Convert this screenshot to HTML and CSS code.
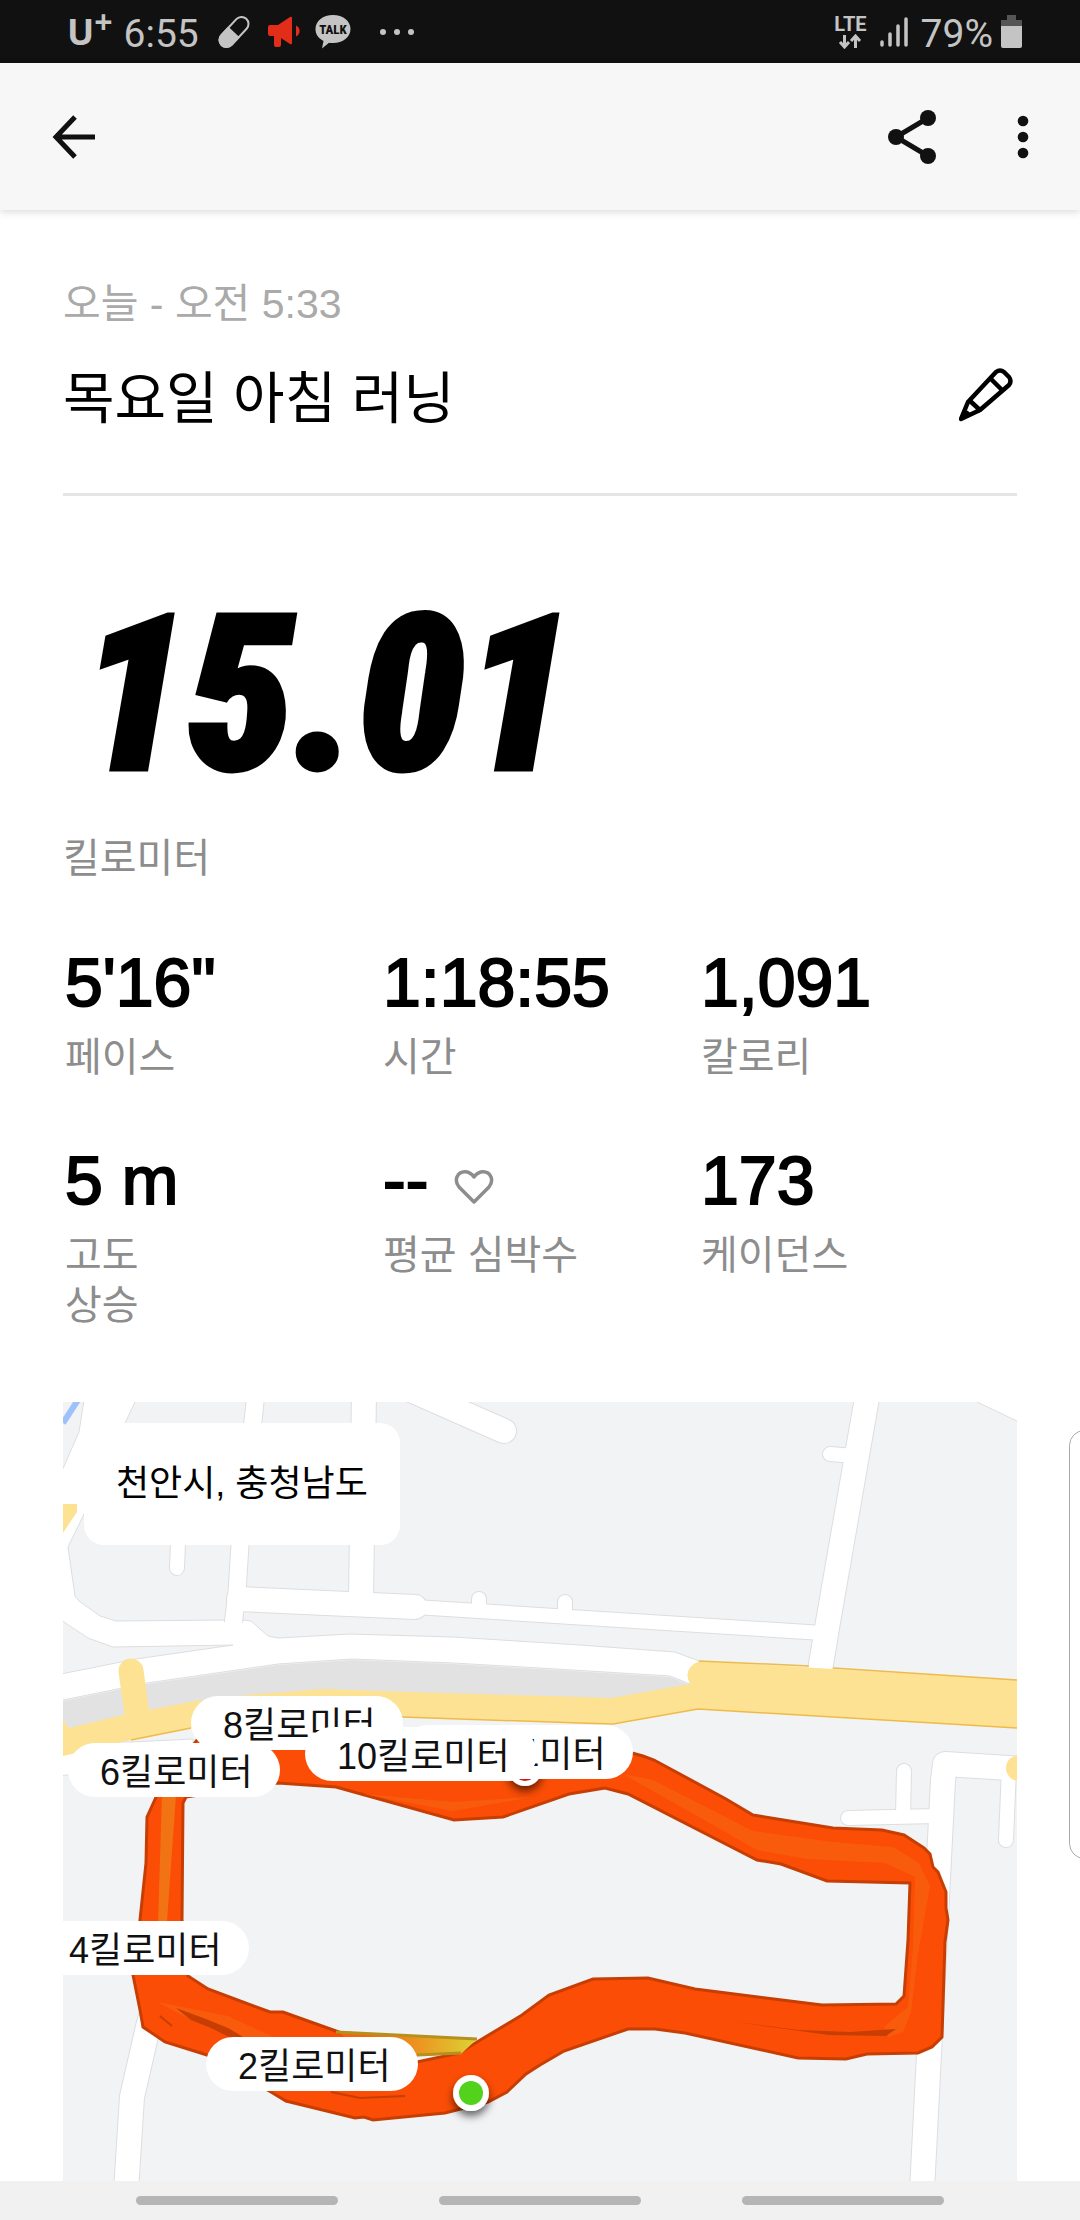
FILE: index.html
```html
<!DOCTYPE html>
<html lang="ko">
<head>
<meta charset="utf-8">
<meta name="viewport" content="width=device-width, initial-scale=1">
<title>목요일 아침 러닝</title>
<link rel="stylesheet" href="styles.css">
</head>
<body>
<div class="screen">
  <div class="status-bar">
    <div class="status-group">
      <span class="carrier">U<span class="carrier-plus">+</span></span>
      <span class="status-text">6:55</span>
      <svg class="ico-pill" width="32" height="34" viewBox="0 0 32 34" aria-hidden="true">
        <g transform="rotate(43 16 17)"><rect x="9" y="-1" width="14" height="36" rx="7" fill="none" stroke="#c4c4c4" stroke-width="2"/><path d="M8 17h16v11a8 8 0 0 1-16 0z" fill="#c4c4c4"/></g>
      </svg>
      <svg class="ico-horn" width="32" height="32" viewBox="0 0 32 32" aria-hidden="true">
        <path d="M2 9h8L22 1q2-1 2 1v25q0 2-2 1l-9-6v7q0 2-2 2H8q-2 0-2-2V20H2q-2 0-2-2v-7q0-2 2-2z" fill="#e22d18"/><path d="M28 9.500a6 6 0 0 1 0 11z" fill="#e22d18"/>
      </svg>
      <svg class="ico-talk" width="36" height="36" viewBox="0 0 36 36" aria-hidden="true">
        <path d="M18 1c10 0 17.500 6 17.500 14S28 29 18 29c-1 0-3 0-4-.3L7 34.500l1.500-7.500C3 24 .5 20 .5 15 .5 7 8 1 18 1z" fill="#c4c4c4"/>
        <text x="18" y="20" text-anchor="middle" font-family="Roboto Condensed, Roboto, sans-serif" font-size="13" font-weight="800" fill="#111">TALK</text>
      </svg>
      <svg class="ico-more" width="36" height="8" viewBox="0 0 36 8" aria-hidden="true" fill="#c4c4c4"><circle cx="4" cy="4" r="3"/><circle cx="18" cy="4" r="3"/><circle cx="32" cy="4" r="3"/></svg>
    </div>
    <div class="status-group status-right">
      <div class="lte">
        <span>LTE</span>
        <svg width="24" height="15" viewBox="0 0 24 15" aria-hidden="true" fill="none" stroke="#c4c4c4" stroke-width="3"><path d="M6.500 1v11M2 8l4.500 5L11 8M17.500 14V3M13 7l4.500-5L22 7"/></svg>
      </div>
      <svg width="28" height="32" viewBox="0 0 28 32" aria-hidden="true" stroke="#c4c4c4" stroke-width="3.500" stroke-linecap="round"><path d="M2 26v3M10 18v11M18 10v19M26 3v26"/></svg>
      <span class="status-text percent">79%</span>
      <svg width="21" height="34" viewBox="0 0 21 34" aria-hidden="true"><path d="M6 0h9v5h6v7H0V5h6z" fill="#555"/><path d="M0 11h21v20q0 2-2 2H2q-2 0-2-2z" fill="#c4c4c4"/></svg>
    </div>
  </div>

  <header class="app-bar">
    <button class="icon-button" type="button" aria-label="뒤로">
      <svg width="44" height="44" viewBox="0 0 44 44" fill="none" stroke="#111" stroke-width="5"><path d="M43 22H5M23 2L4 22l19 20"/></svg>
    </button>
    <div class="app-actions">
      <button class="icon-button" type="button" aria-label="공유">
        <svg width="48" height="54" viewBox="0 0 48 54" fill="#111"><path d="M40 8L8 27l32 19" fill="none" stroke="#111" stroke-width="5"/><circle cx="40" cy="8" r="8"/><circle cx="8" cy="27" r="8"/><circle cx="40" cy="46" r="8"/></svg>
      </button>
      <button class="icon-button" type="button" aria-label="더보기">
        <svg width="12" height="44" viewBox="0 0 12 44" fill="#111"><circle cx="6" cy="6" r="5.300"/><circle cx="6" cy="22" r="5.300"/><circle cx="6" cy="38" r="5.300"/></svg>
      </button>
    </div>
  </header>

  <main class="content">
    <section class="run-head">
      <p class="run-date">오늘 - 오전 5:33</p>
      <div class="run-title-row">
        <h1 class="run-title">목요일 아침 러닝</h1>
        <button class="icon-button" type="button" aria-label="이름 편집">
          <svg width="58" height="62" viewBox="0 0 58 62" fill="none" stroke="#000" stroke-width="4.500" stroke-linejoin="round"><path d="M2 51l7-17L37 4q4-3 8 0l5 5q3 4 0 8L21 42z"/><path d="M32 11l11 11M10 32l12 11M7 44l4 4M3 50l5-7"/></svg>
        </button>
      </div>
    </section>

    <section class="distance">
      <p class="distance-value">15.01</p>
      <p class="label">킬로미터</p>
    </section>

    <dl class="stats">
      <div class="stat"><dd class="stat-value">5'16"</dd><dt class="label">페이스</dt></div>
      <div class="stat"><dd class="stat-value">1:18:55</dd><dt class="label">시간</dt></div>
      <div class="stat"><dd class="stat-value">1,091</dd><dt class="label">칼로리</dt></div>
      <div class="stat"><dd class="stat-value">5 m</dd><dt class="label">고도<br>상승</dt></div>
      <div class="stat"><dd class="stat-value">--<svg class="heart" width="40" height="36" viewBox="0 0 40 36" aria-hidden="true"><path d="M20 33L5 18Q1 13 3 8c3-7 12-7 17 0 5-7 14-7 17 0q2 5-2 10z" fill="none" stroke="#8d8d8d" stroke-width="3.500" stroke-linejoin="round"/></svg></dd><dt class="label">평균 심박수</dt></div>
      <div class="stat"><dd class="stat-value">173</dd><dt class="label">케이던스</dt></div>
    </dl>

    <section class="map" aria-label="러닝 경로">
      <svg class="map-canvas" viewBox="0 0 954 779" preserveAspectRatio="xMinYMin slice" aria-hidden="true">
        <defs>
          <linearGradient id="pace" x1="300" y1="0" x2="410" y2="0" gradientUnits="userSpaceOnUse"><stop offset="0" stop-color="#f5640f"/><stop offset=".5" stop-color="#ec9420"/><stop offset="1" stop-color="#dcd034"/></linearGradient>
          <filter id="drop" x="-50%" y="-50%" width="200%" height="200%"><feDropShadow dx="0" dy="5" stdDeviation="4" flood-opacity=".6"/></filter>
          <g id="roads">
            <path class="w18" d="M192-10V0L177 143l-3 47-4 34"/>
            <path class="w25" d="M301-10L298 196"/>
            <path class="w25" d="M176 197L352 205"/>
            <path class="w15" d="M352 205L760 231M416 197v12M502 200v13M115 140l-1 26M767 52l24 2"/>
            <path class="w25" d="M341-15l100 44M805-10L765 220l-9 54"/>
            <path class="w25" d="M104 390v170L85 625 69 695l-6 94"/>
            <path class="w25" d="M859 789L880 378l2-16 80 5"/>
            <path class="w15" d="M841 369l-1 45M785 416l88-2M946 366l-3 72"/>
          </g>
        </defs>
        <rect width="954" height="779" fill="#f1f3f5"/>
        <path d="M0 21L15-2" stroke="#9ec1fa" stroke-width="6"/>
        <g fill="#fff" stroke="#dcdee1" stroke-width="1">
          <path d="M21-2H73L62 21 21 112 5 145l7 49 4 5 21 15 16 5 112-1 15 0 8 1 17 15 10 2 72-4 103 3 127 8 95 7 24 9-9 23-20-8-130-8-87-5-101-4-74 5-131 19-84 17H-2V272l75-15 97-14-120 2-25-9-27-18V71L16 30z"/>
          <path d="M910-2L956 20V-2z"/>
          <path d="M-2 340H68L130 337v12L-2 374z"/>
        </g>
        <use href="#roads" class="casing"/>
        <use href="#roads" class="paved"/>
        <path d="M54 220h110l24 1 17 15-30 6-125 2z" fill="#fff"/>
        <path d="M0 299l84-17 131-19 74-5 101 4 87 5 130 8 20 8-79 14-31 2-168-6-90 2L6 326 0 318z" fill="#e2e2e2"/>
        <path d="M0 102h14v8L0 131z" fill="#fde293"/>
        <path d="M0 318l6 8 54-13 72-14 53-6 74-6 90 3 168 5 31 1 79-14q-8-15 9-23l318 19v48l-319-19-85 15-33-1-178-6-211 11-60 12-68 16z" fill="#fde293"/>
        <path d="M68 338l60-12M339 315l178 6 33 1 85-15 319 19M636 259l110 5M770 266l184 12" fill="none" stroke="#eebb49" stroke-width="1.500"/>
        <path d="M68 269l7 50" stroke="#fde293" stroke-width="25" stroke-linecap="round"/>
        <circle cx="956" cy="366" r="13" fill="#fde293"/>

        <path d="M134 338l70-2 160-8 120 6 85 17 11 3 11 4 72 39 27 16 80 13 49 2 22 5 20 13 6 6 3 13 5 5 8 20v16l2 12-3 22-3 95-10 10-14 6-51 1-21 5-48-1-113-25-30-4h-27l-64 22-24 14-14 9-19 18-19 10-43 11-72 7-9-3-9 1-69-17-15-9-64-37-42-13-22-15-3-17-7-35 7-55 6-57 1-46 10-22z
          M215 381l58 4 118 33 49-3 66-23 36-6 23 6 129 66 24 4 46 17 83 2-2 57-4 56-8 8-74 1-127-16-47-11-55 1-44 16-27 20-45 27-18 11-42 9-24-10-57-21-53-19h-13l-62-23-20-13-6-56 1-117 3-6z" fill="#fb4d05" fill-rule="evenodd" stroke="#c63e04" stroke-width="3"/>
        <g fill="#f95b0c">
          <path d="M560 372l30 6 100 51 80 11 60 5 25 15 12 24-12 68-7 58-8 20-15 5-4-10 24-20 5-60 2-70-30-14-78-4-50-9z"/>
          <path d="M95 600l70 14 60 28-45-4-60-24zM300 392l90 8 80-5-80 14z"/>
        </g>
        <path d="M99 393h14l-9 127h-9z" fill="#f17314"/>
        <path d="M113 606l30 11 22 9 17 10-14 0-20-10-20-8zM673 620l62 8 52 2 46-3-10 7-57-1z" fill="#c63e04"/>
        <path d="M97 614l12 10M268 690l29 6 45-2" fill="none" stroke="#c63e04" stroke-width="2"/>
        <path d="M273 629l141 8-16 15-44 2-54-6z" fill="url(#pace)"/>
        <path d="M273 630l141 7M354 653l44-2" fill="none" stroke="#b5901c" stroke-width="3"/>
        <g filter="url(#drop)"><circle cx="462" cy="367" r="17" fill="#fff"/><circle cx="408" cy="691" r="18" fill="#fff"/></g>
        <circle cx="462" cy="367" r="12" fill="#d8141c"/><circle cx="408" cy="691" r="12" fill="#52d21a"/>
      </svg>
      <p class="place">천안시, 충청남도</p>
      <span class="pin pin-2">2킬로미터</span>
      <span class="pin pin-4">4킬로미터</span>
      <span class="pin pin-8">8킬로미터</span>
      <span class="pin pin-6">6킬로미터</span>
      <span class="pin pin-12">12킬로미터</span>
      <span class="pin pin-10">10킬로미터</span>
    </section>
  </main>

  <div class="edge-handle"></div>
  <nav class="nav-bar" aria-label="시스템 탐색">
    <button class="nav-key" type="button" aria-label="최근 앱"></button>
    <button class="nav-key" type="button" aria-label="홈"></button>
    <button class="nav-key" type="button" aria-label="이전"></button>
  </nav>
</div>
</body>
</html>
```
FILE: styles.css
```css
* { box-sizing: border-box; }
body, p, h1, dl, dd { margin: 0; }
body {
  background: #fff;
  color: #000;
  font-family: "Liberation Sans", "Noto Sans CJK KR", sans-serif;
}
button { padding: 0; border: 0; background: none; cursor: pointer; }
svg { display: block; flex: none; }

.screen {
  position: relative;
  display: flex;
  flex-direction: column;
  height: 100vh;
  overflow: hidden;
}

.status-bar {
  display: flex;
  flex: none;
  justify-content: space-between;
  height: 63px;
  padding: 0 58px 0 67px;
  background: #111;
  color: #c4c4c4;
}
.status-group { display: flex; align-items: center; gap: 14px; }
.carrier { display: flex; margin-right: -3px; font: 700 36px/40px "Open Sans", sans-serif; }
.carrier-plus { font-size: 32px; line-height: 20px; }
.status-text { font: 400 39px/46px Roboto, sans-serif; padding-top: 4px; }
.ico-pill { margin-left: 5px; }
.ico-horn { margin-left: 4px; }
.ico-talk { margin-left: 1px; }
.ico-more { margin-left: 14px; }
.lte {
  display: flex;
  flex-direction: column;
  align-items: center;
  gap: 1px;
  font: 700 20px/18px Roboto, sans-serif;
}
.status-right { gap: 13px; }
.percent { margin-right: -5px; }

.app-bar {
  position: relative;
  display: flex;
  flex: none;
  align-items: center;
  justify-content: space-between;
  height: 147px;
  padding: 0 51px 0 52px;
  background: #f7f7f7;
  box-shadow: 0 2px 8px rgba(0, 0, 0, .15);
}
.app-actions { display: flex; align-items: center; gap: 81px; }

.content {
  display: flex;
  flex: 1;
  flex-direction: column;
  min-height: 0;
  padding: 69px 63px 0;
}
.run-head { padding-bottom: 54px; border-bottom: 3px solid #e5e5e5; }
.run-date { color: #aaa; font-size: 41px; line-height: 50px; }
.run-title-row {
  display: flex;
  align-items: center;
  justify-content: space-between;
  margin-top: 30px;
}
.run-title { font-size: 56px; font-weight: 400; line-height: 80px; }

.distance { padding: 100px 0 0; }
.distance-value {
  padding-left: 17px;
  font: italic 900 216px/200px "Roboto Condensed", Roboto, sans-serif;
  -webkit-text-stroke: 5px #000;
}
.label { color: #8d8d8d; font-size: 40px; line-height: 50px; }
.distance .label { margin-top: 37px; }

.stats {
  display: grid;
  grid-template-columns: repeat(3, 1fr);
  row-gap: 58px;
  margin-top: 59px;
}
.stat { display: flex; flex-direction: column; gap: 10px; padding-left: 2px; }
.stat-value {
  display: flex;
  align-items: center;
  font-size: 68px;
  line-height: 80px;
  -webkit-text-stroke: 2px #000;
}
.heart { margin: 14px 0 0 26px; }

.map {
  position: relative;
  flex: 1;
  min-height: 0;
  margin-top: 72px;
  overflow: hidden;
  background: #f1f3f5;
}
.map-canvas { width: 100%; height: 100%; }
.casing { fill: none; stroke: #dcdee1; stroke-linecap: round; stroke-linejoin: round; }
.paved { fill: none; stroke: #fff; stroke-linecap: round; stroke-linejoin: round; }
.casing { --edge: 2px; }
.paved { --edge: 0px; }
.w15 { stroke-width: calc(14px + var(--edge)); }
.w18 { stroke-width: calc(17px + var(--edge)); }
.w25 { stroke-width: calc(24px + var(--edge)); }

.place {
  position: absolute;
  top: 21px;
  left: 21px;
  padding: 0 32px;
  border-radius: 20px;
  background: #fff;
  font-size: 36px;
  line-height: 122px;
}
.pin {
  position: absolute;
  height: 54px;
  padding: 0 27px 0 32px;
  border-radius: 27px;
  background: #fff;
  color: #111;
  font-size: 36px;
  line-height: 60px;
  white-space: nowrap;
}
.pin-2 { left: 143px; top: 635px; }
.pin-4 { left: -26px; top: 519px; }
.pin-6 { left: 5px; top: 341px; }
.pin-8 { left: 128px; top: 294px; }
.pin-10 { left: 242px; top: 325px; }
.pin-12 { left: 338px; top: 323px; }

.edge-handle {
  position: absolute;
  top: 1430px;
  right: -20px;
  width: 31px;
  height: 429px;
  border: 1px solid #aaa;
  border-radius: 16px;
  background: #fff;
}

.nav-bar {
  display: flex;
  flex: none;
  align-items: center;
  justify-content: center;
  gap: 101px;
  height: 39px;
  background: #f1f1f1;
}
.nav-key { width: 202px; height: 9px; border-radius: 5px; background: #b5b5b5; }
```
